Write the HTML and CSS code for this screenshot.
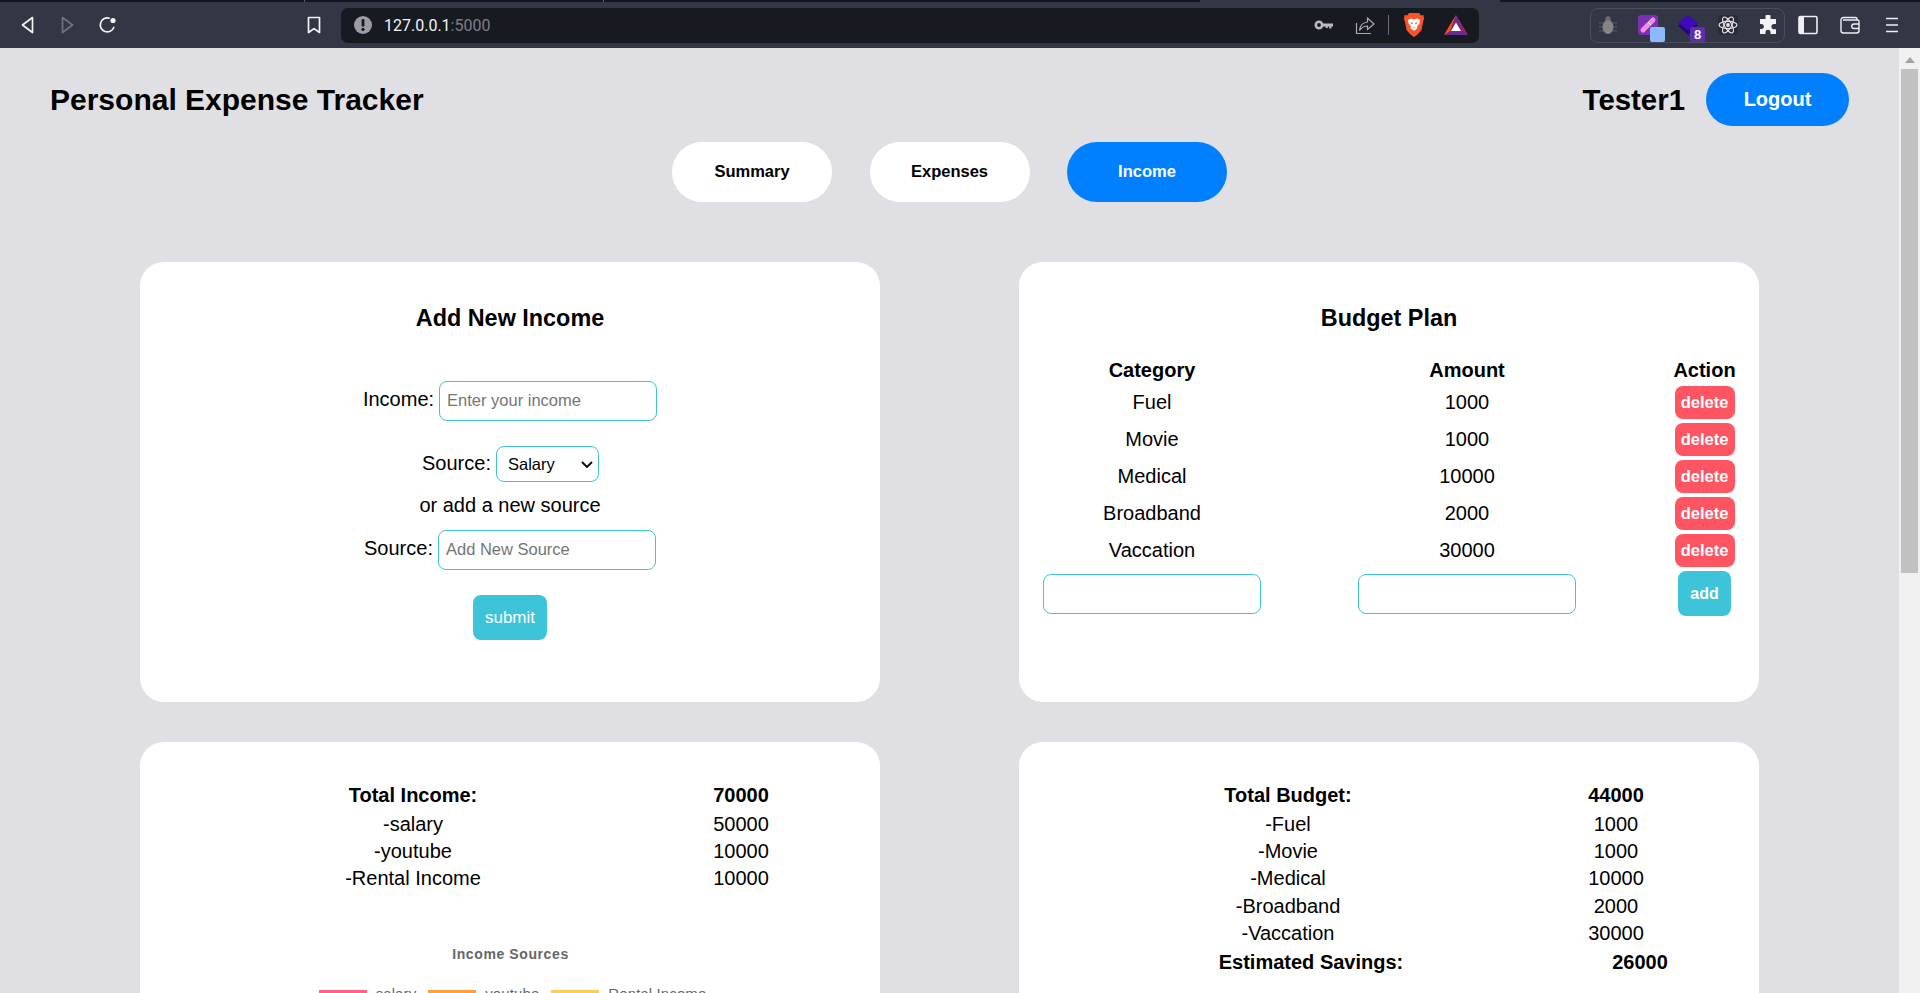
FILE: index.html
```html
<!DOCTYPE html>
<html lang="en">
<head>
    <meta charset="UTF-8">
    <meta name="viewport" content="width=device-width, initial-scale=1.0">
    <title>Personal Expense Tracker</title>
    <link rel="stylesheet" href="styles.css">
</head>
<body>
    <div class="tab-strip">
        <span class="strip-tab first"></span>
        <span class="strip-tab second"></span>
        <span class="strip-tab third"></span>
        <span class="strip-tab current"></span>
        <span class="strip-tab rest"></span>
    </div>
    <div class="toolbar">
        <svg class="tool-icon" viewBox="0 0 20 20"><path class="line" d="M14.5 2.5 4.5 10l10 7.5z"/></svg>
        <svg class="tool-icon forward" viewBox="0 0 20 20"><path class="line dim" d="M4.5 2.5 14.5 10l-10 7.5z"/></svg>
        <svg class="tool-icon" viewBox="0 0 20 20"><path class="line" d="M15.8 12.5A7 7 0 1 1 11 3.1"/><circle cx="15" cy="5.5" r="2.6" fill="#f4f4f6"/></svg>
        <svg class="tool-icon bookmark" viewBox="0 0 20 20"><path class="line" d="M4.5 2.5h11v15L10 13.6 4.5 17.5z"/></svg>
        <div class="address-bar">
            <svg class="tool-icon" viewBox="0 0 20 20"><circle cx="10" cy="10" r="9" fill="#9b9da6"/><rect x="8.6" y="4" width="2.8" height="7.6" rx="1.2" fill="#181a21"/><circle cx="10" cy="14.4" r="1.6" fill="#181a21"/></svg>
            <span class="url">127.0.0.1<span class="url-port">:5000</span></span>
            <svg class="tool-icon key" viewBox="0 0 20 20"><circle cx="5" cy="10" r="3.2" fill="none" stroke="#b9bac0" stroke-width="2.6"/><path fill="#b9bac0" d="M8 8.6h11v3h-1.6v2h-2.2v-2h-1.4v1.400h-2.200v-1.400H8z"/></svg>
            <svg class="tool-icon share" viewBox="0 0 20 20"><path fill="none" stroke="#a9abb2" stroke-width="1.200" d="M1.500 8v10.500h14.500M4.500 15.500c.5-5 3.500-8 8-8.500V3l6.500 6-6.500 5.500V11c-3.500 0-6 1.500-8 4.500z"/></svg>
            <span class="address-sep"></span>
            <svg class="lion" viewBox="0 0 20 24"><path fill="#fb542b" d="M5 0h10l2 2.500 2.500-.5.500 4-1 3-1.500 8-4 4.500L10 24l-3.500-2.500-4-4.500L1 9 0 6l.5-4L3 2.500z"/><path fill="#fff" d="M4 7l3-1.500 3 1 3-1L16 7l-.5 3.500-2.500 3 .5 1.500L10 18l-3.500-3 .5-1.500-2.500-3z"/><path fill="#fb542b" d="M6.500 9l2.500 1-1 1.800zM13.500 9 11 10l1 1.800zM9 14h2l-1 1.200z"/></svg>
            <svg class="bat" viewBox="0 0 24 20"><path fill="#662d91" d="M12 0l12 20H0z"/><path fill="#9e1f63" d="M12 0l12 20-6-4z"/><path fill="#ff5000" d="M12 0 0 20l6-4z"/><path fill="#fff" d="M12 7.500l5 8.500H7z"/></svg>
        </div>
        <div class="ext-group">
            <span class="ext-item">
                <svg class="tool-icon" viewBox="0 0 20 20"><path stroke="#565a68" stroke-width="1" d="M1 8h4M1 12h4M1 16h4M15 8h4M15 12h4M15 16h4"/><circle cx="10" cy="4" r="2.800" fill="#6a6a6a"/><ellipse cx="10" cy="12" rx="5.500" ry="7" fill="#858585"/></svg>
            </span>
            <span class="ext-item">
                <svg class="tool-icon" viewBox="0 0 20 20"><rect width="20" height="20" rx="3" fill="#7a2fb5"/><path stroke="#f28fd6" stroke-width="5" stroke-linecap="round" d="M5 15 15 5"/><path stroke="#fff" stroke-width="1" d="M10 7l3 3"/></svg>
                <span class="ext-badge pale"></span>
            </span>
            <span class="ext-item">
                <svg class="tool-icon" viewBox="0 0 20 20"><path fill="#22057a" d="M0 10.500 10 4l10 6.500L10 20z"/><path fill="#3f0ab8" d="M0 8 10 0l10 8-10 7.500z"/></svg>
                <span class="ext-badge count">8</span>
            </span>
            <span class="ext-item">
                <svg class="tool-icon" viewBox="0 0 20 20"><rect width="20" height="20" rx="2" fill="#2a2c38"/><g fill="none" stroke="#e8e8ec" stroke-width="1.100"><ellipse cx="10" cy="10" rx="9" ry="3.600"/><ellipse cx="10" cy="10" rx="9" ry="3.600" transform="rotate(60 10 10)"/><ellipse cx="10" cy="10" rx="9" ry="3.600" transform="rotate(120 10 10)"/></g><circle cx="10" cy="10" r="1.900" fill="#e8e8ec"/></svg>
            </span>
            <span class="ext-item">
                <svg class="tool-icon" viewBox="0 0 20 20"><path fill="#f2f2f4" d="M7.500 1.500a2.500 2.500 0 0 1 5 0V4H18v5h-2a2.600 2.600 0 0 0 0 5.200h2V19h-5.500v-1.800a2.500 2.500 0 0 0-5 0V19H2v-5h1.500a2.500 2.500 0 0 0 0-5H2V4h5.500z"/></svg>
            </span>
        </div>
        <svg class="tool-icon sidebar-icon" viewBox="0 0 20 20"><rect x="1" y="1.500" width="18" height="17" rx="1.500" fill="none" stroke="#f0f0f2" stroke-width="1.600"/><rect x="1" y="1.500" width="5" height="17" fill="#f0f0f2"/></svg>
        <svg class="tool-icon wallet" viewBox="0 0 20 20"><path fill="none" stroke="#f0f0f2" stroke-width="1.400" d="M17 4.500V3.800c0-.9-.7-1.300-1.500-1.300H3.500C2 2.500 1 3.500 1 5v10.500C1 17 2 18 3.500 18h13c1.500 0 2.500-1 2.500-2.500v-9c0-1-.8-1.500-1.500-1.500H3"/><path fill="none" stroke="#f0f0f2" stroke-width="1.400" d="M19 9h-5a2.200 2.200 0 0 0 0 4.500h5"/></svg>
        <svg class="tool-icon menu" viewBox="0 0 20 20"><path stroke="#f0f0f2" stroke-width="1.500" d="M4 3.500h12M4 10h12M4 16.500h12"/></svg>
    </div>

    <div class="viewport">
        <div class="page">
            <header class="top-bar">
                <h1 class="app-title">Personal Expense Tracker</h1>
                <div class="user-box">
                    <span class="user-name">Tester1</span>
                    <button class="logout-btn">Logout</button>
                </div>
            </header>

            <nav class="tabs">
                <a class="tab">Summary</a>
                <a class="tab">Expenses</a>
                <a class="tab active">Income</a>
            </nav>

            <main class="cards">
                <section class="card form-card">
                    <h2 class="card-title">Add New Income</h2>
                    <form class="income-form">
                        <div class="form-row">
                            <label>Income:</label>
                            <input class="text-input" type="text" placeholder="Enter your income">
                        </div>
                        <div class="form-row select-row">
                            <label>Source:</label>
                            <span class="select-wrap">
                                <select class="source-select"><option>Salary</option></select>
                                <svg class="select-arrow" viewBox="0 0 12 7"><path d="M1 1l5 5 5-5"/></svg>
                            </span>
                        </div>
                        <p class="form-or">or add a new source</p>
                        <div class="form-row">
                            <label>Source:</label>
                            <input class="text-input" type="text" placeholder="Add New Source">
                        </div>
                        <button class="submit-btn" type="button">submit</button>
                    </form>
                </section>

                <section class="card budget-card">
                    <h2 class="card-title">Budget Plan</h2>
                    <div class="budget-grid">
                        <strong>Category</strong><strong>Amount</strong><strong>Action</strong>
                        <span>Fuel</span><span>1000</span><button class="delete-btn">delete</button>
                        <span>Movie</span><span>1000</span><button class="delete-btn">delete</button>
                        <span>Medical</span><span>10000</span><button class="delete-btn">delete</button>
                        <span>Broadband</span><span>2000</span><button class="delete-btn">delete</button>
                        <span>Vaccation</span><span>30000</span><button class="delete-btn">delete</button>
                        <input class="text-input wide" type="text">
                        <input class="text-input wide" type="text">
                        <button class="add-btn">add</button>
                    </div>
                </section>

                <section class="card totals-card">
                    <div class="totals income-totals">
                        <strong class="total-head">Total Income:</strong><strong class="total-head">70000</strong>
                        <span>-salary</span><span>50000</span>
                        <span>-youtube</span><span>10000</span>
                        <span>-Rental Income</span><span>10000</span>
                    </div>
                    <div class="chart">
                        <div class="chart-title">Income Sources</div>
                        <div class="legend">
                            <span class="legend-item"><i class="swatch pink"></i>salary</span>
                            <span class="legend-item"><i class="swatch orange"></i>youtube</span>
                            <span class="legend-item"><i class="swatch yellow"></i>Rental Income</span>
                        </div>
                    </div>
                </section>

                <section class="card totals-card">
                    <div class="totals budget-totals">
                        <strong class="total-head">Total Budget:</strong><strong class="total-head">44000</strong>
                        <span>-Fuel</span><span>1000</span>
                        <span>-Movie</span><span>1000</span>
                        <span>-Medical</span><span>10000</span>
                        <span>-Broadband</span><span>2000</span>
                        <span>-Vaccation</span><span>30000</span>
                    </div>
                    <div class="totals savings">
                        <strong>Estimated Savings:</strong><strong>26000</strong>
                    </div>
                </section>
            </main>
        </div>

        <div class="scrollbar">
            <span class="scroll-arrow"></span>
            <span class="scroll-thumb"></span>
        </div>
    </div>
</body>
</html>
```

FILE: styles.css
```css
* {
    box-sizing: border-box;
}

body {
    margin: 0;
    height: 993px;
    overflow: hidden;
    display: flex;
    flex-direction: column;
    font-family: "Liberation Sans", Arial, sans-serif;
    font-size: 20px;
    color: #000;
    background-color: #e0e0e4;
}

/* browser tabs, only their lower edge shows */
.tab-strip {
    flex: none;
    height: 2px;
    display: flex;
    background-color: #14161d;
}

.strip-tab {
    display: block;
    border-right: 1px solid #5a5d6a;
}

.first {
    width: 305px;
}

.second {
    width: 299px;
}

.third {
    width: 299px;
    border-right: none;
}

.current {
    width: 597px;
    margin-left: 0;
    border-right: none;
    background: linear-gradient(90deg, #14161d 297px, #323645 297px);
}

.rest {
    flex: 1;
    border-right: none;
}

/* browser toolbar */
.toolbar {
    flex: none;
    height: 46px;
    display: flex;
    align-items: center;
    padding: 0 0 0 18px;
    background-color: #323645;
}

.tool-icon {
    flex: none;
    display: block;
    width: 20px;
    height: 20px;
}

.line {
    fill: none;
    stroke: #f4f4f6;
    stroke-width: 1.7;
    stroke-linejoin: round;
    stroke-linecap: round;
}

.dim {
    stroke: #6f7280;
}

.forward {
    margin: 0 20px;
}

.bookmark {
    margin-left: 186px;
}

.address-bar {
    flex: none;
    width: 1138px;
    height: 35px;
    margin-left: 17px;
    padding: 0 11px 0 12px;
    display: flex;
    align-items: center;
    background-color: #181a21;
    border-radius: 7px;
}

.url {
    margin-left: 11px;
    font-family: Roboto, sans-serif;
    font-size: 16px;
    color: #f4f4f6;
}

.url-port {
    color: #7d7f88;
}

.key {
    margin-left: auto;
}

.share {
    margin-left: 21px;
}

.address-sep {
    width: 1px;
    height: 20px;
    margin: 0 15px 0 13px;
    background-color: #6b6d76;
}

.lion {
    flex: none;
    width: 20px;
    height: 24px;
}

.bat {
    flex: none;
    width: 24px;
    height: 20px;
    margin-left: 20px;
}

.ext-group {
    flex: none;
    width: 195px;
    height: 35px;
    margin-left: 111px;
    padding-left: 7px;
    display: flex;
    align-items: center;
    gap: 20px;
    border: 1px solid #4a4e5e;
    border-radius: 8px;
}

.ext-item {
    position: relative;
    display: block;
}

.ext-badge {
    position: absolute;
    left: 12px;
    top: 12px;
    width: 15px;
    height: 15px;
    border-radius: 2px;
    font-size: 13px;
    font-weight: bold;
    line-height: 15px;
    text-align: center;
    color: #fff;
}

.pale {
    background-color: #8db8fb;
}

.count {
    background-color: #5b2fb0;
}

.sidebar-icon {
    margin-left: 13px;
}

.wallet {
    margin-left: 22px;
}

.menu {
    margin-left: 22px;
}

/* page */
.viewport {
    flex: 1;
    min-height: 0;
    display: flex;
}

.page {
    flex: 1;
    min-width: 0;
    overflow: hidden;
}

.scrollbar {
    flex: none;
    width: 21px;
    padding: 0 2px;
    background-color: #f1f1f1;
}

.scroll-arrow {
    display: block;
    width: 0;
    height: 0;
    margin: 9px auto 0;
    border-left: 5px solid transparent;
    border-right: 5px solid transparent;
    border-bottom: 6px solid #a3a3a3;
}

.scroll-thumb {
    display: block;
    height: 504px;
    margin-top: 6px;
    background-color: #c1c1c1;
}

.top-bar {
    display: flex;
    justify-content: space-between;
    align-items: center;
    padding: 25px 50px 0;
}

.app-title {
    margin: 0;
    font-size: 30px;
    font-weight: bold;
}

.user-box {
    display: flex;
    align-items: center;
    gap: 21px;
}

.user-name {
    font-size: 29.400px;
    font-weight: bold;
}

.logout-btn {
    width: 143px;
    height: 53px;
    border: none;
    border-radius: 27px;
    background-color: #0080ff;
    color: #fff;
    font-family: inherit;
    font-size: 20px;
    font-weight: bold;
}

.tabs {
    display: flex;
    justify-content: center;
    gap: 37.500px;
    margin-top: 16px;
}

.tab {
    width: 160px;
    height: 60px;
    padding-bottom: 1px;
    display: flex;
    align-items: center;
    justify-content: center;
    border-radius: 30px;
    background-color: #fff;
    font-size: 16.500px;
    font-weight: bold;
}

.tab.active {
    background-color: #0080ff;
    color: #fff;
}

.cards {
    display: grid;
    grid-template-columns: 740px 740px;
    column-gap: 139px;
    row-gap: 40px;
    margin: 60px 0 0 140px;
}

.card {
    height: 440px;
    background-color: #fff;
    border-radius: 24px;
}

.card-title {
    margin: 0;
    padding-top: 43px;
    font-size: 23.400px;
    font-weight: bold;
    line-height: 26px;
    text-align: center;
}

.income-form {
    display: flex;
    flex-direction: column;
    align-items: center;
    margin-top: 50px;
}

.form-row {
    display: flex;
    align-items: center;
    gap: 5px;
    height: 40px;
    margin-bottom: 25px;
}

.form-row label {
    margin-bottom: 3px;
}

.select-row {
    height: 36px;
    margin-bottom: 10px;
    padding-left: 1px;
}

.select-row label {
    margin-bottom: 1px;
}

.form-or {
    margin: 0 0 12px;
    line-height: 26px;
}

.text-input {
    width: 218px;
    height: 40px;
    padding: 0 7px 2px;
    background-color: #fff;
    border: 1px solid #3ec4d8;
    border-radius: 8px;
    font-family: inherit;
    font-size: 16.500px;
}

.text-input::placeholder {
    color: #757575;
}

.select-wrap {
    position: relative;
    display: block;
}

.source-select {
    display: block;
    width: 103px;
    height: 36px;
    padding: 0 8px 1px 11px;
    appearance: none;
    background-color: #fff;
    border: 1px solid #3ec4d8;
    border-radius: 8px;
    color: #000;
    font-family: inherit;
    font-size: 16.500px;
}

.select-arrow {
    position: absolute;
    right: 6px;
    top: 15px;
    width: 12px;
    height: 7px;
    pointer-events: none;
    fill: none;
    stroke: #111;
    stroke-width: 2;
}

.submit-btn {
    width: 74px;
    height: 45px;
    border: none;
    border-radius: 8px;
    background-color: #3ec4d8;
    color: #fff;
    font-family: inherit;
    font-size: 17px;
}

.budget-grid {
    display: grid;
    grid-template-columns: 218px 218px 63px;
    column-gap: 97px;
    row-gap: 4px;
    justify-items: center;
    align-items: center;
    margin: 28px 0 0 24px;
}

.delete-btn {
    width: 60px;
    height: 33px;
    padding: 0;
    border: none;
    border-radius: 8px;
    background-color: #ff5562;
    color: #fff;
    font-family: inherit;
    font-size: 16.500px;
    font-weight: bold;
}

.add-btn {
    width: 53px;
    height: 45px;
    padding: 0;
    border: none;
    border-radius: 8px;
    background-color: #3ec4d8;
    color: #fff;
    font-family: inherit;
    font-size: 16px;
    font-weight: bold;
}

.totals {
    display: grid;
    grid-template-columns: 200px 100px;
    column-gap: 178px;
    justify-items: center;
    line-height: 27.300px;
}

.income-totals {
    padding: 39.600px 0 0 173px;
}

.budget-totals {
    padding: 39.600px 0 0 169px;
}

.total-head {
    padding-bottom: 2px;
}

.savings {
    column-gap: 179px;
    padding: 2px 0 0 192px;
}

.chart {
    margin-top: 52.800px;
    color: #666;
}

.chart-title {
    padding-left: 1px;
    font-size: 14px;
    font-weight: bold;
    letter-spacing: 0.6px;
    line-height: 16px;
    text-align: center;
}

.legend {
    display: flex;
    justify-content: center;
    gap: 12px;
    margin-top: 24px;
    padding-left: 5px;
    font-size: 15px;
    letter-spacing: 0.1px;
    line-height: 16px;
}

.legend-item {
    display: flex;
    gap: 9px;
}

.swatch {
    display: block;
    width: 48px;
    height: 14px;
    margin-top: 4px;
}

.pink {
    background-color: #ff6384;
}

.orange {
    background-color: #ff9f40;
}

.yellow {
    background-color: #ffcd56;
}
```
